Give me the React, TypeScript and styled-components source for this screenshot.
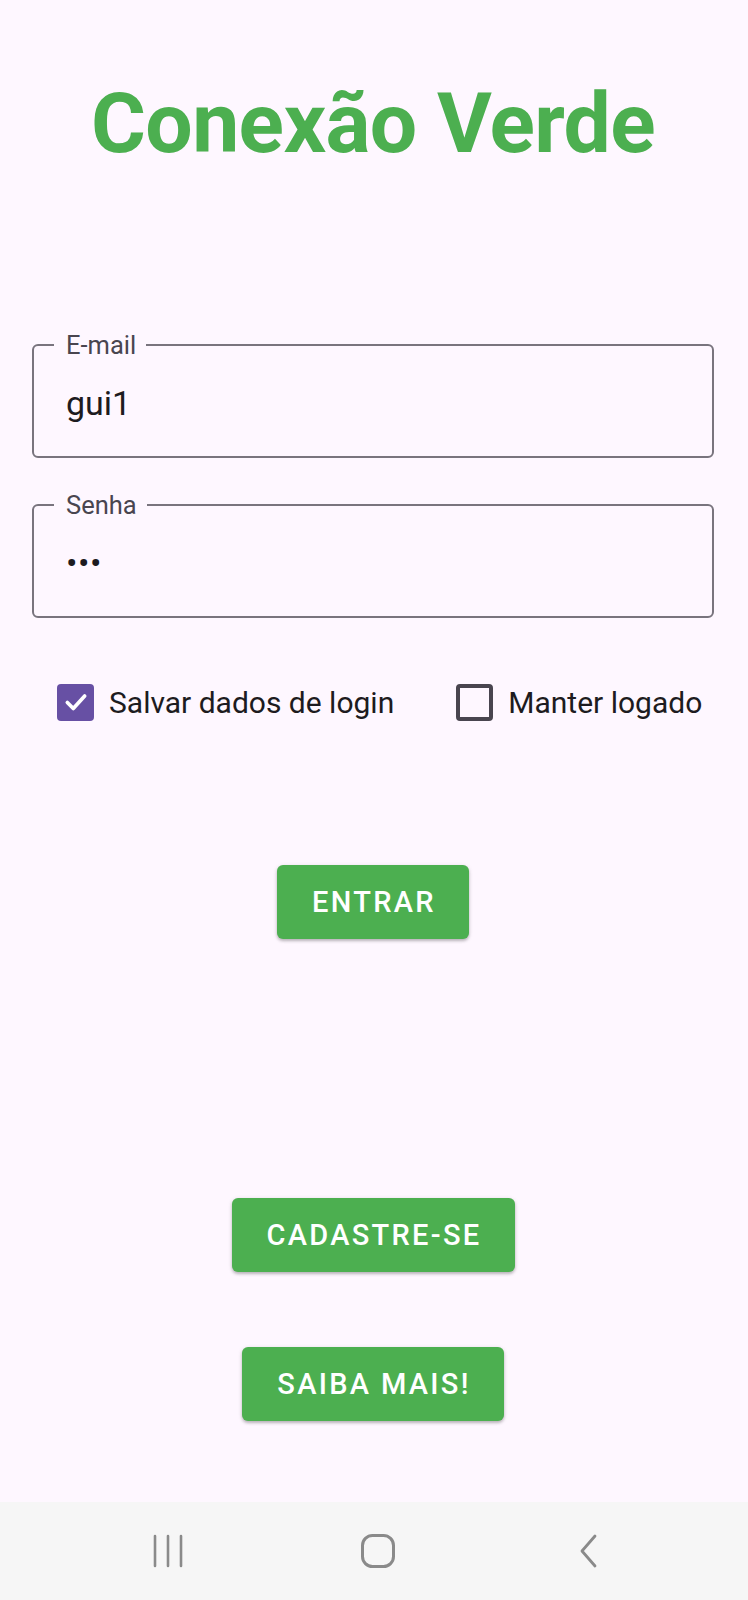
import React from "react";
import styled, { createGlobalStyle } from "styled-components";

const GlobalStyle = createGlobalStyle`
  html, body {
    margin: 0;
    padding: 0;
    background: #fef7ff;
  }
  body {
    font-family: Roboto, "Noto Sans", Arial, sans-serif;
    -webkit-font-smoothing: antialiased;
  }
  * { box-sizing: border-box; }
`;

const Screen = styled.div`
  width: 748px;
  height: 1600px;
  display: flex;
  flex-direction: column;
  background: #fef7ff;
  overflow: hidden;
`;

const Main = styled.main`
  flex: 1;
  display: flex;
  flex-direction: column;
  padding: 0 34px 0 32px;
`;

const Title = styled.h1`
  margin: 74px 0 0;
  height: 100px;
  line-height: 100px;
  font-family: Roboto, sans-serif;
  font-weight: 700;
  font-size: 84px;
  letter-spacing: -0.6px;
  color: #4caf50;
  text-align: center;
  white-space: nowrap;
`;

const Field = styled.fieldset<{ $top: number }>`
  margin: ${(p) => p.$top}px 0 0;
  padding: 0 20px;
  border: 2px solid #79747e;
  border-radius: 6px;
  min-width: 0;
`;

const Legend = styled.legend`
  padding: 0 10px 0 12px;
  margin: 0;
  height: 26px;
  line-height: 26px;
  font-size: 25.5px;
  color: #49454f;
  font-family: Roboto, sans-serif;
`;

const Value = styled.div<{ $dots?: boolean }>`
  margin-left: 12px;
  height: 98px;
  padding-bottom: 8px;
  line-height: 90px;
  font-size: 34px;
  color: #1d1b20;
  font-family: Roboto, sans-serif;
  letter-spacing: ${(p) => (p.$dots ? "0.5px" : "0")};
`;

const CheckRow = styled.div`
  margin-top: 60px;
  height: 48px;
  display: flex;
  align-items: center;
  gap: 62px;
  padding-left: 25px;
`;

const CheckItem = styled.label`
  display: flex;
  align-items: center;
  gap: 15px;
  font-size: 30px;
  color: #1d1b20;
  font-family: Roboto, sans-serif;
  white-space: nowrap;
`;

const Box = styled.span<{ $checked?: boolean }>`
  width: 37px;
  height: 37px;
  border-radius: 4px;
  flex: none;
  display: flex;
  align-items: center;
  justify-content: center;
  background: ${(p) => (p.$checked ? "#6750a4" : "transparent")};
  border: ${(p) => (p.$checked ? "none" : "4px solid #49454f")};
`;

const Button = styled.button<{ $top: number }>`
  align-self: center;
  margin-top: ${(p) => p.$top}px;
  height: 74px;
  padding: 0 33px 0 35px;
  border: none;
  border-radius: 6px;
  background: #4caf50;
  color: #ffffff;
  font-family: Roboto, sans-serif;
  font-weight: 500;
  font-size: 29px;
  letter-spacing: 2.3px;
  text-transform: uppercase;
  box-shadow: 0 2px 3px rgba(0, 0, 0, 0.22), 0 1px 5px rgba(0, 0, 0, 0.1);
`;

const NavBar = styled.nav`
  height: 98px;
  flex: none;
  background: #f6f6f6;
  display: flex;
  align-items: center;
  justify-content: center;
  gap: 150px;
  padding-left: 8px;
`;

const NavSlot = styled.div`
  width: 60px;
  height: 40px;
  display: flex;
  align-items: center;
  justify-content: center;
`;

const Check = () => (
  <svg width="26" height="26" viewBox="0 0 24 24" fill="none">
    <path
      d="M4 12.5 L9.5 18 L20 6.5"
      stroke="#ffffff"
      strokeWidth="3.4"
      strokeLinecap="round"
      strokeLinejoin="round"
    />
  </svg>
);

export default function App() {
  return (
    <>
      <GlobalStyle />
      <Screen>
        <Main>
          <Title>Conexão Verde</Title>
          <Field $top={158}>
            <Legend>E-mail</Legend>
            <Value>gui1</Value>
          </Field>
          <Field $top={34}>
            <Legend>Senha</Legend>
            <Value $dots>•••</Value>
          </Field>
          <CheckRow>
            <CheckItem>
              <Box $checked>
                <Check />
              </Box>
              Salvar dados de login
            </CheckItem>
            <CheckItem>
              <Box />
              Manter logado
            </CheckItem>
          </CheckRow>
          <Button $top={139}>Entrar</Button>
          <Button $top={259}>Cadastre-se</Button>
          <Button $top={75}>Saiba mais!</Button>
        </Main>
        <NavBar>
          <NavSlot>
            <svg width="32" height="34" viewBox="0 0 32 34" fill="none">
              <path d="M3 2 V32 M16 2 V32 M29 2 V32" stroke="#8a8a8a" strokeWidth="2.6" strokeLinecap="round" />
            </svg>
          </NavSlot>
          <NavSlot>
            <svg width="36" height="36" viewBox="0 0 36 36" fill="none">
              <rect x="2.5" y="2.5" width="31" height="31" rx="10" stroke="#8a8a8a" strokeWidth="3" />
            </svg>
          </NavSlot>
          <NavSlot>
            <svg width="20" height="36" viewBox="0 0 20 36" fill="none">
              <path d="M17 3 L4 18 L17 33" stroke="#8a8a8a" strokeWidth="2.8" strokeLinecap="round" strokeLinejoin="round" />
            </svg>
          </NavSlot>
        </NavBar>
      </Screen>
    </>
  );
}
